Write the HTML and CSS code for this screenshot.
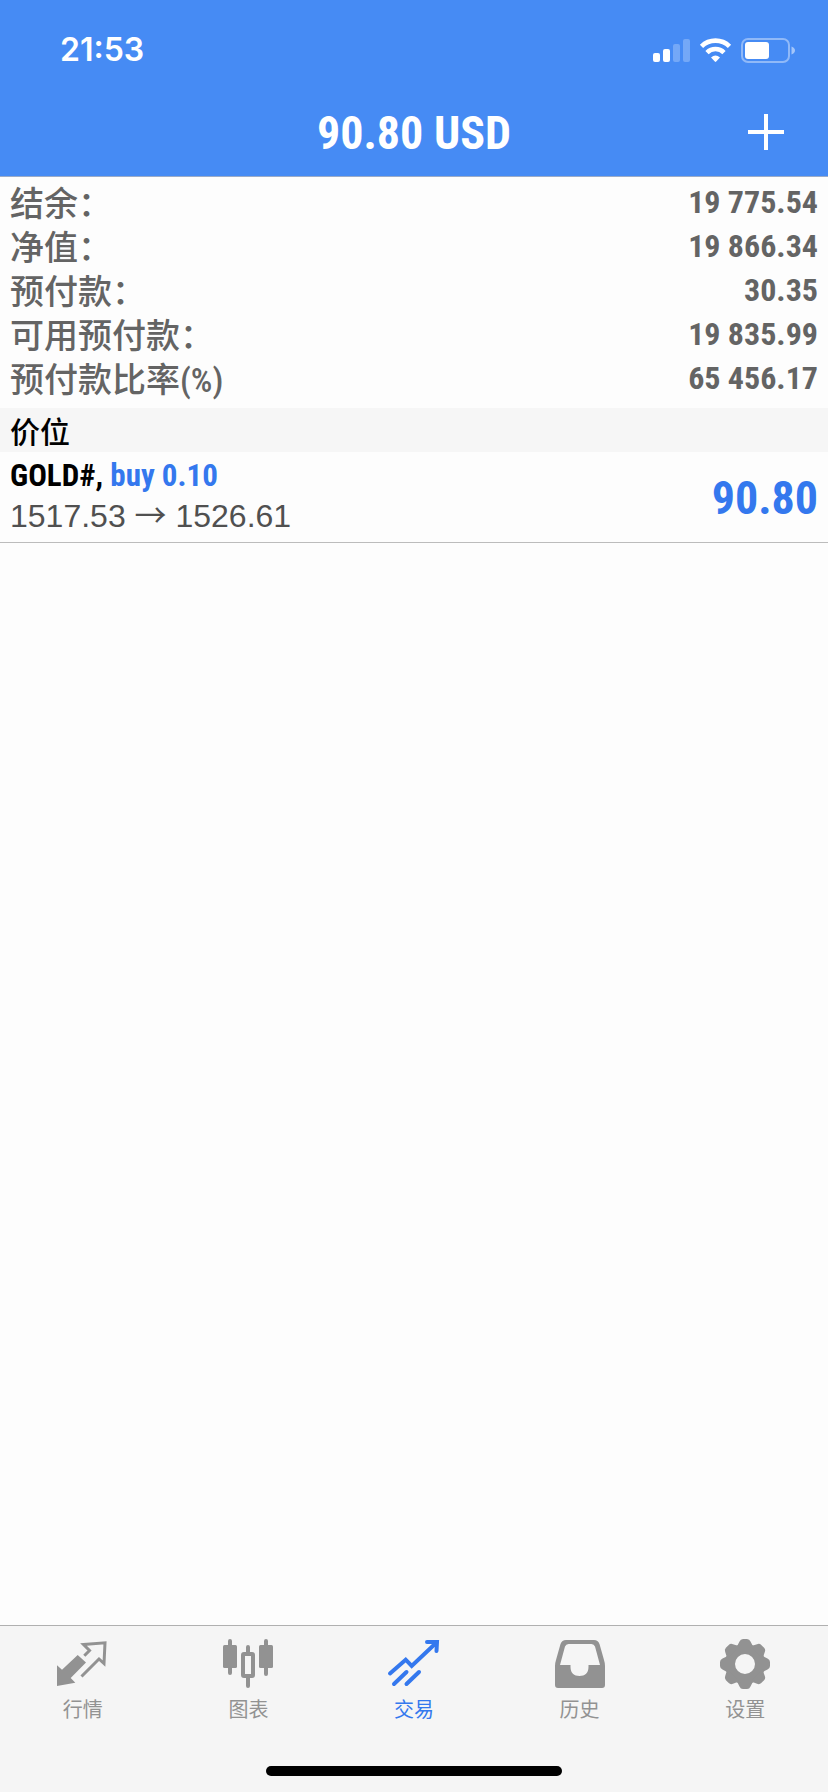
FILE: index.html
```html
<!DOCTYPE html>
<html lang="zh-CN">
<head>
<meta charset="utf-8">
<meta name="viewport" content="width=device-width, initial-scale=1">
<title>交易</title>
<link rel="stylesheet" href="styles.css">
</head>
<body>
<div class="app">
  <header class="header">
    <div class="status">
      <span class="clock">21:53</span>
      <svg class="status-icons" viewBox="0 0 142 24" aria-hidden="true">
        <g fill="#fff">
          <rect x="0" y="15" width="7" height="9" rx="2"/>
          <rect x="10" y="11" width="7" height="13" rx="2"/>
          <rect x="20" y="6" width="7" height="18" rx="2" opacity=".25"/>
          <rect x="30" y="1" width="7" height="23" rx="2" opacity=".25"/>
          <path d="M58 19.500 Q62.500 15.500 67 19.500 L63.200 23.600 Q62.500 24.200 61.800 23.600Z"/>
        </g>
        <g fill="none" stroke="#fff" stroke-width="4.600">
          <path d="M48.500 8.300 A20 20 0 0 1 76.500 8.300"/>
          <path d="M54 14.600 A12 12 0 0 1 71 14.600"/>
        </g>
        <rect x="89" y="1" width="47" height="23" rx="6" fill="none" stroke="#fff" stroke-width="2" opacity=".4"/>
        <rect x="92" y="4" width="24" height="17" rx="3" fill="#fff"/>
        <path d="M138.500 8.500 Q142 10 142 12.500 T138.500 16.500Z" fill="#fff" opacity=".5"/>
      </svg>
    </div>
    <div class="titlebar">
      <h1 class="title">90.80 USD</h1>
      <button class="add" type="button" aria-label="+">
        <svg viewBox="0 0 36 36"><path d="M18 0V36M0 18H36" stroke="#fff" stroke-width="4"/></svg>
      </button>
    </div>
  </header>
  <main class="content">
    <dl class="account">
      <div class="account-row"><dt>结余：</dt><dd>19 775.54</dd></div>
      <div class="account-row"><dt>净值：</dt><dd>19 866.34</dd></div>
      <div class="account-row"><dt>预付款：</dt><dd>30.35</dd></div>
      <div class="account-row"><dt>可用预付款：</dt><dd>19 835.99</dd></div>
      <div class="account-row"><dt>预付款比率<span class="unit">(%)</span></dt><dd>65 456.17</dd></div>
    </dl>
    <h2 class="section">价位</h2>
    <div class="position">
      <div class="position-info">
        <div class="symbol">GOLD#, <span class="side">buy 0.10</span></div>
        <div class="prices">1517.53 <span class="arrow">→</span> 1526.61</div>
      </div>
      <div class="profit">90.80</div>
    </div>
  </main>
  <nav class="tabs">
    <div class="tab-row">
      <a class="tab" href="#quotes">
        <svg class="tab-icon" viewBox="0 0 50 50">
          <path d="M-1 26.300 L4 30.700 L19.700 16 L28 23.500 L12.700 39 L17.300 43.700 L-1 47Z" fill="currentColor"/>
          <path d="M26.300 16.700 L31.500 11.500 L25.500 5.500 L47 3.800 L46 24.500 L41 20 L23.500 37.500" fill="none" stroke="currentColor" stroke-width="3"/>
        </svg>
        <span>行情</span>
      </a>
      <a class="tab" href="#charts">
        <svg class="tab-icon" viewBox="0 0 50 50">
          <g fill="currentColor"><rect y="6" width="14" height="23" rx="1.500"/><rect x="36" y="6" width="14" height="23" rx="1.500"/></g>
          <g fill="none" stroke="currentColor" stroke-width="4">
            <path d="M7 2V34M43 2V35M25 8V14M25 38V47" stroke-linecap="round"/>
            <rect x="20" y="15" width="10" height="22" rx="1"/>
          </g>
        </svg>
        <span>图表</span>
      </a>
      <a class="tab tab-active" href="#trade" aria-current="page">
        <svg class="tab-icon" viewBox="0 0 50 50">
          <g fill="none" stroke="currentColor" stroke-width="4" stroke-linecap="round">
            <path d="M1 34.500 L16.700 20.700 L22.700 27 L47 4M38 3H48L47.500 12M5 45L17.500 33M17.500 45L30 33"/>
          </g>
        </svg>
        <span>交易</span>
      </a>
      <a class="tab" href="#history">
        <svg class="tab-icon" viewBox="0 0 50 50">
          <path fill="currentColor" fill-rule="evenodd" d="M11 1H39Q43 1 44.500 5L49 21Q50 24 50 27V46Q50 49 47 49H3Q0 49 0 46V27Q0 24 1 21L5.500 5Q7 1 11 1ZM13.500 5Q11 5 10 7.500L5 26H15.500V28C15.500 34 19 37 24.500 37S33.500 34 33.500 28V26H45L40 7.500Q39 5 36.500 5Z"/>
        </svg>
        <span>历史</span>
      </a>
      <a class="tab" href="#settings">
        <svg class="tab-icon" viewBox="0 0 50 50">
          <defs><path id="tooth" d="M15 9 Q18 6.500 19.500 2.500 Q20.500 0 23 0H27Q29.500 0 30.500 2.500Q32 6.500 35 9Z"/></defs>
          <circle cx="25" cy="25" r="14.500" fill="none" stroke="currentColor" stroke-width="9"/>
          <g fill="currentColor">
            <use href="#tooth"/><use href="#tooth" transform="rotate(45 25 25)"/>
            <use href="#tooth" transform="rotate(90 25 25)"/><use href="#tooth" transform="rotate(135 25 25)"/>
            <use href="#tooth" transform="rotate(180 25 25)"/><use href="#tooth" transform="rotate(225 25 25)"/>
            <use href="#tooth" transform="rotate(270 25 25)"/><use href="#tooth" transform="rotate(315 25 25)"/>
          </g>
        </svg>
        <span>设置</span>
      </a>
    </div>
    <div class="home-indicator"></div>
  </nav>
</div>
</body>
</html>
```
FILE: styles.css
```css
* { box-sizing: border-box; }

body {
  --condensed: "Roboto Condensed", "Liberation Sans Narrow", "Liberation Sans", sans-serif;
  margin: 0;
  background: #fdfdfd;
  color: #000;
  font-family: "Liberation Sans", "Noto Sans CJK SC", sans-serif;
}

h1, h2, dl, dd { margin: 0; }

.app {
  display: flex;
  flex-direction: column;
  min-height: 100vh;
}

.header {
  background: #468bf4;
  border-bottom: 1px solid #9aabc8;
  color: #fff;
}

.status {
  display: flex;
  align-items: center;
  justify-content: space-between;
  height: 88px;
  padding: 12px 33px 0 60px;
}

.clock {
  font: 600 32px/40px Inter, sans-serif;
}

.status-icons {
  width: 142px;
  height: 24px;
  overflow: visible;
}

.titlebar {
  display: grid;
  grid-template-columns: 1fr auto 1fr;
  align-items: center;
  height: 88px;
  padding: 0 44px;
}

.title {
  grid-column: 2;
  padding-top: 2px;
  font: 700 46px/56px var(--condensed);
}

.add {
  justify-self: end;
  padding: 0;
  border: 0;
  background: none;
}

.add svg {
  display: block;
  width: 36px;
  height: 36px;
}

.content { flex: 1; }

.account {
  padding: 3px 10px 8px;
  color: #646464;
}

.account-row {
  display: flex;
  justify-content: space-between;
  height: 44px;
  line-height: 44px;
}

.account-row dt {
  font-family: "Noto Sans CJK SC", sans-serif;
  font-size: 34px;
  font-weight: 500;
}

.unit {
  font-family: var(--condensed);
  line-height: 1;
}

.account-row dd {
  font-family: var(--condensed);
  font-size: 32px;
  font-weight: 700;
}

.section {
  padding: 0 10px;
  background: #f6f6f6;
  font: 500 30px/44px "Noto Sans CJK SC", sans-serif;
}

.position {
  display: flex;
  align-items: center;
  justify-content: space-between;
  padding: 3px 10px 5px;
  border-bottom: 1px solid #bcbcbc;
}

.symbol {
  font: 700 31px/41px var(--condensed);
}

.side, .profit { color: #3478ee; }

.prices {
  color: #505050;
  font-size: 32px;
  line-height: 41px;
}

.arrow {
  font-family: "Noto Sans CJK SC", sans-serif;
  line-height: 1;
}

.profit {
  padding-top: 4px;
  font: 700 46px/56px var(--condensed);
}

.tabs {
  border-top: 1px solid #b0b0b0;
  background: #f5f5f5;
}

.tab-row {
  display: grid;
  grid-template-columns: repeat(5, 1fr);
  padding-top: 13px;
}

.tab {
  display: flex;
  flex-direction: column;
  align-items: center;
  gap: 5px;
  color: #929292;
  font: 400 20px/30px "Noto Sans CJK SC", sans-serif;
  text-decoration: none;
}

.tab-active { color: #3478ee; }

.tab-icon {
  width: 50px;
  height: 50px;
  overflow: visible;
}

.home-indicator {
  width: 296px;
  height: 10px;
  margin: 42px auto 16px;
  border-radius: 5px;
  background: #000;
}
```
